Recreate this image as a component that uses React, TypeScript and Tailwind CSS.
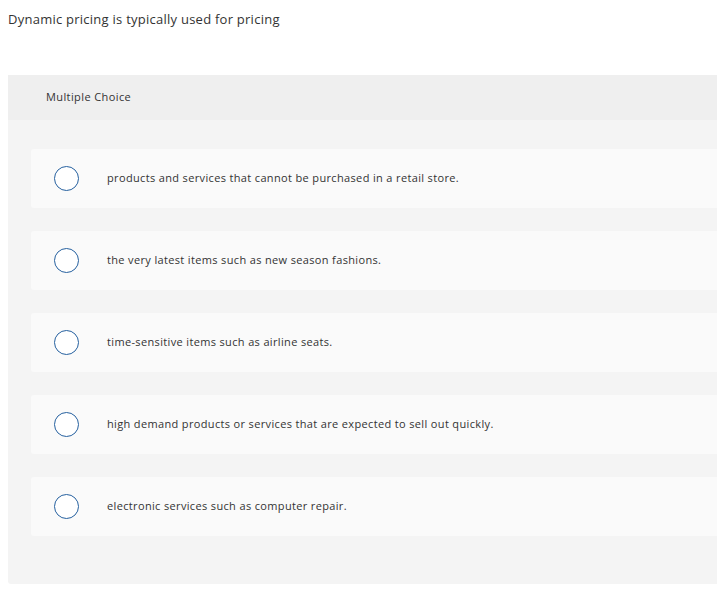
import React from "react";

const options = [
  "products and services that cannot be purchased in a retail store.",
  "the very latest items such as new season fashions.",
  "time-sensitive items such as airline seats.",
  "high demand products or services that are expected to sell out quickly.",
  "electronic services such as computer repair.",
];

export default function App() {
  return (
    <div className="w-[717px] h-[591px] bg-white font-['Open_Sans','Liberation_Sans',sans-serif] text-[#333]">
      <div className="pl-[8px] pt-[10px] h-[75px] text-[13px] leading-[18px] tracking-[0.25px]">
        Dynamic pricing is typically used for pricing
      </div>
      <div className="ml-[8px] h-[509px] bg-[#f4f4f4] rounded-bl-[3px] flex flex-col">
        <div className="h-[45px] bg-[#efefef] flex items-center pl-[38px] text-[11px] tracking-[0.4px] text-[#333]">
          Multiple Choice
        </div>
        <div className="flex flex-col gap-[23px] pt-[29px] pl-[23px]">
          {options.map((o, i) => (
            <div key={i} className="h-[59px] bg-[#fafafa] rounded-l-[3px] flex items-center">
              <div className="ml-[23px] w-[25px] h-[25px] rounded-full border-[1.5px] border-[#25609f] bg-white shrink-0" />
              <div className="ml-[28px] text-[11px] tracking-[0.35px] text-[#333]">{o}</div>
            </div>
          ))}
        </div>
      </div>
    </div>
  );
}
